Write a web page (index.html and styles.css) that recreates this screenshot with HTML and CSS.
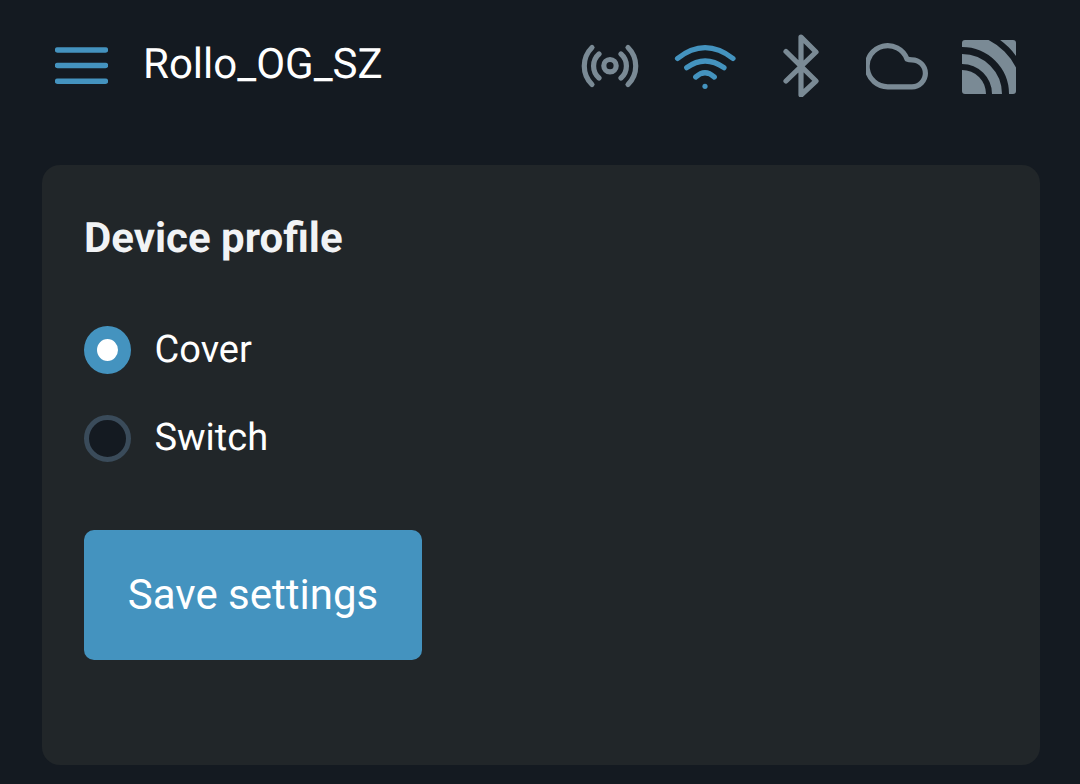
FILE: index.html
```html
<!DOCTYPE html>
<html lang="en">
<head>
  <meta charset="UTF-8">
  <meta name="viewport" content="width=device-width, initial-scale=1.0">
  <title>Rollo_OG_SZ</title>
  <link rel="stylesheet" href="styles.css">
</head>
<body>

<header class="topbar">
  <button class="menu-button" aria-label="Menu">
    <svg class="menu-icon" viewBox="0 0 53 38" width="53" height="38">
      <path d="M2.5 3H50.5M2.5 18.5H50.5M2.5 34.2H50.5"/>
    </svg>
  </button>
  <h1 class="device-name">Rollo_OG_SZ</h1>

  <div class="status-icons">
    <svg class="status-icon" viewBox="0 0 64 64" width="64" height="64">
      <circle cx="32" cy="32.7" r="6.2"/>
      <path d="M21 21A16 16 0 0 0 21 45M43 21A16 16 0 0 1 43 45M14 14.5A26 26 0 0 0 14 51.5M50 14.5A26 26 0 0 1 50 51.5"/>
    </svg>
    <svg class="status-icon active" viewBox="0 0 64 64" width="64" height="64">
      <path d="M3.5 25.5Q31 3.9 59 25.5M12.7 34.7Q31 21.3 50 34.7M21.7 44Q31 35.4 40.3 44"/>
      <circle class="dot" cx="31" cy="53.3" r="2.6"/>
    </svg>
    <svg class="status-icon" viewBox="0 0 64 64" width="64" height="64">
      <path d="M16 18.5L46 48L31 62V4L46 19L16 48"/>
    </svg>
    <svg class="status-icon" viewBox="0 0 64 64" width="64" height="64">
      <path d="M22 53.8A20.6 20.6 0 1 1 41 26Q43 26.8 45.9 26.8A13.5 13.5 0 0 1 45.9 53.8Z"/>
    </svg>
    <svg class="status-icon rss" viewBox="0 0 64 64" width="64" height="64">
      <clipPath id="rss-box"><rect x="0" y="7" width="54" height="54" rx="3"/></clipPath>
      <g clip-path="url(#rss-box)">
        <circle class="wedge" cx="0" cy="61" r="24"/>
        <circle cx="0" cy="61" r="35" stroke-width="10"/>
        <circle cx="0" cy="61" r="53.5" stroke-width="13"/>
        <circle cx="0" cy="61" r="78" stroke-width="24"/>
      </g>
    </svg>
  </div>
</header>

<main class="card">
  <h2 class="card-title">Device profile</h2>

  <label class="radio-row">
    <input type="radio" name="profile" value="cover" class="radio" checked>
    Cover
  </label>
  <label class="radio-row">
    <input type="radio" name="profile" value="switch" class="radio">
    Switch
  </label>

  <button class="save-button">Save settings</button>
</main>

</body>
</html>
```

FILE: styles.css
```css
body {
  font-family: Roboto, sans-serif;
  text-rendering: geometricPrecision;
  background-color: #141a21;
  color: #fff;
  margin: 0;
  padding: 0;
}
.topbar {
  display: flex;
  align-items: center;
  height: 130px;
  padding: 0 54px 0 55px;
}
.menu-button {
  display: flex;
  padding: 0;
  margin: 2px 35px 0 0;
  background: none;
  border: none;
}
.menu-icon path {
  fill: none;
  stroke: #4493bf;
  stroke-width: 5.4;
  stroke-linecap: round;
}
.device-name {
  margin: 0 0 2px;
  font-size: 42px;
  font-weight: 400;
}
.status-icons {
  display: flex;
  gap: 32px;
  margin-left: auto;
}
.status-icon {
  fill: none;
  stroke: #7a8a95;
  stroke-width: 5.2;
  stroke-linecap: round;
  stroke-linejoin: round;
}
.status-icon.active {
  stroke: #4493bf;
}
.status-icon .dot {
  fill: #4493bf;
  stroke: none;
}
.status-icon.rss {
  stroke-linecap: butt;
}
.status-icon .wedge {
  fill: #7a8a95;
  stroke: none;
}
.card {
  height: 600px;
  box-sizing: border-box;
  margin: 35px 40px 0 42px;
  padding: 46px 42px;
  background-color: #212629;
  border-radius: 18px;
}
.card-title {
  margin: 0 0 59px;
  font-size: 42px;
  font-weight: 700;
  line-height: 56px;
  color: #f1f3f5;
}
.radio-row {
  display: flex;
  align-items: center;
  gap: 23.5px;
  height: 48px;
  margin-bottom: 40px;
  font-size: 38px;
}
.radio {
  appearance: none;
  width: 47px;
  height: 47px;
  box-sizing: border-box;
  margin: 0;
  background-color: #141a21;
  border: 5px solid #3a4b5a;
  border-radius: 50%;
}
.radio:checked {
  height: 48px;
  background-color: #fff;
  border: 13px solid #4493bf;
}
.save-button {
  display: block;
  width: 338px;
  height: 130px;
  margin-top: 68px;
  padding: 0 0 2px;
  font-family: inherit;
  font-size: 42px;
  color: #fff;
  background-color: #4493bf;
  border: none;
  border-radius: 10px;
}
```
